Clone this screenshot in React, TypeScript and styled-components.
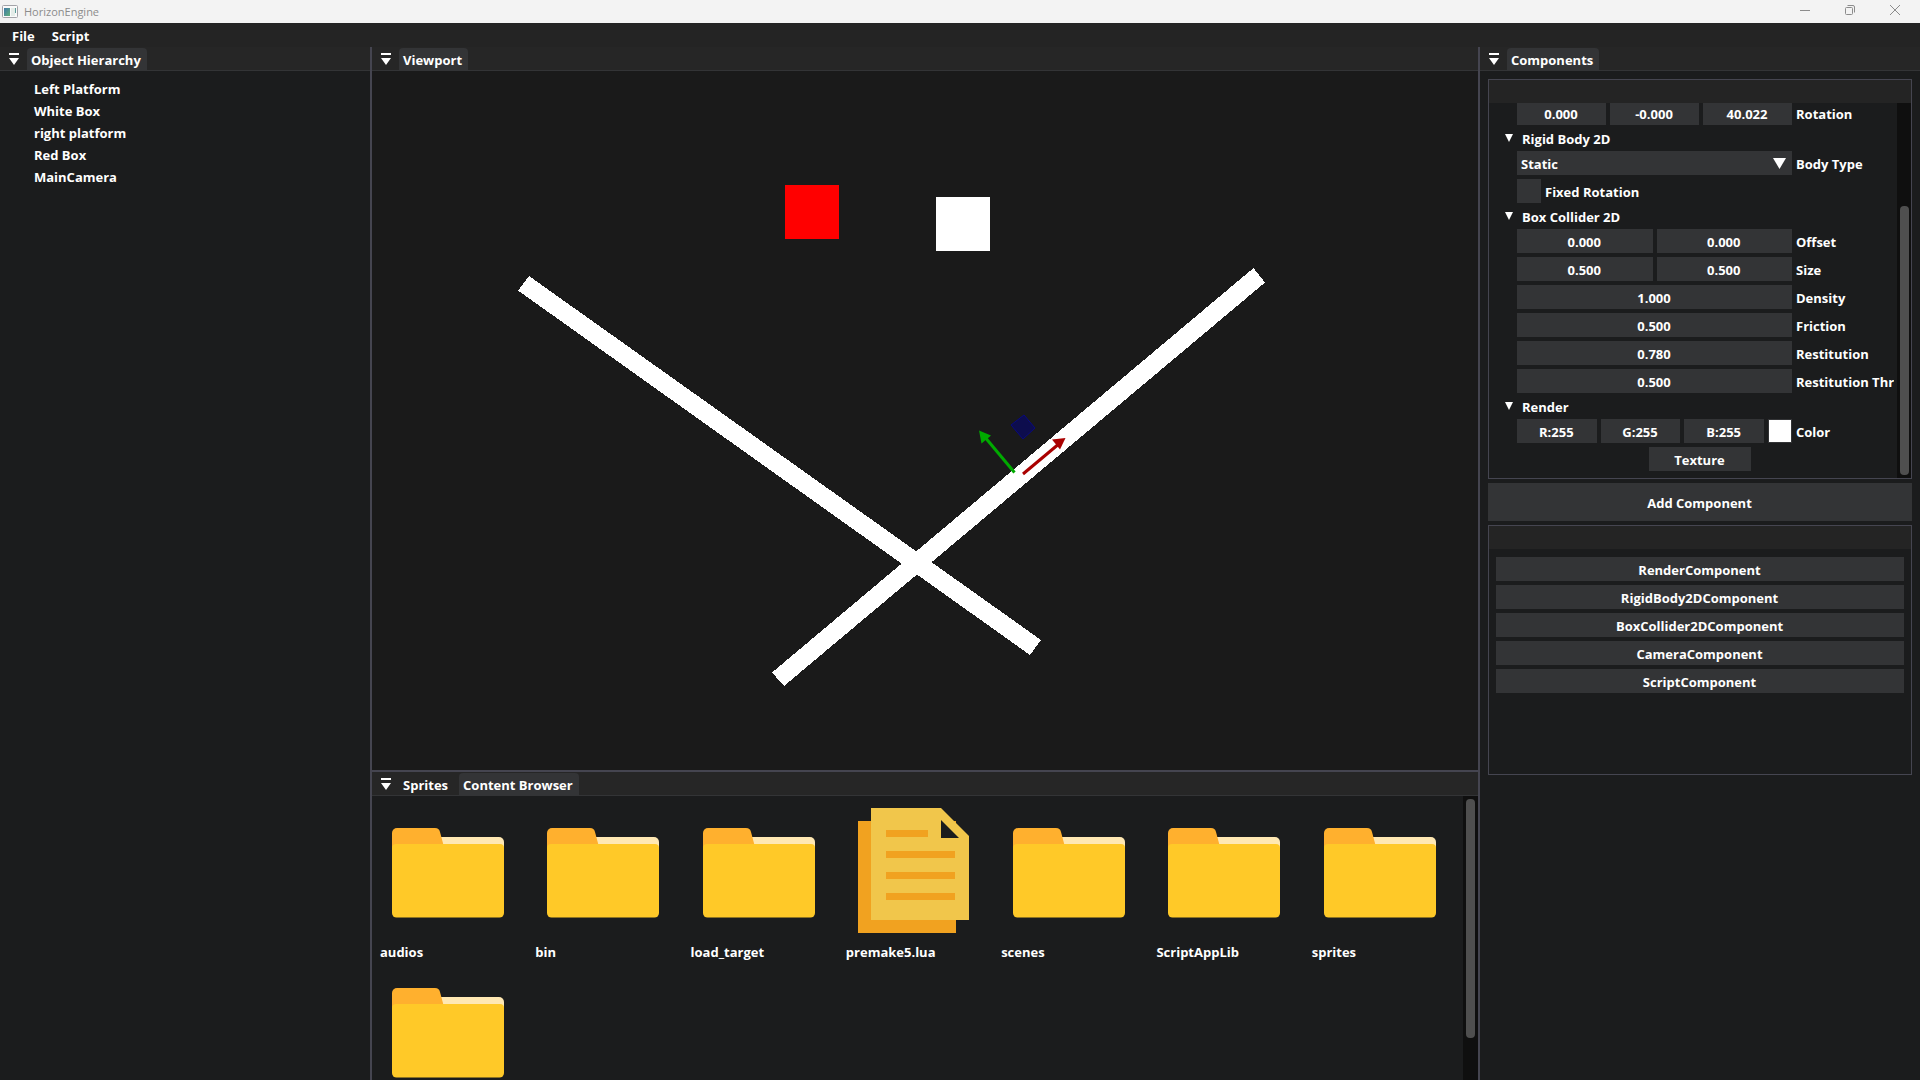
import React from "react";
import styled, { createGlobalStyle } from "styled-components";

const color = {
  window: "#1b1c1d",
  scene: "#1a1a1a",
  bar: "#242424",
  tabBar: "#262626",
  control: "#333436",
  border: "#454550",
  track: "#0f0f0f",
  thumb: "#4f4f4f",
  text: "#ffffff",
};

const GlobalStyle = createGlobalStyle`
  *, *::before, *::after { box-sizing: border-box; }
  body { margin: 0; background: ${color.window}; }
  body, button, input, select {
    font: 700 13px/18px "Open Sans", "Noto Sans", sans-serif;
    color: ${color.text};
  }
  button { border: 0; padding: 0; background: none; }
`;

const Window = styled.div`
  height: 100vh;
  display: flex;
  flex-direction: column;
  overflow: hidden;
`;

const TitleBar = styled.header`
  flex: none;
  height: 23px;
  display: flex;
  align-items: center;
  gap: 6px;
  padding: 0 6px 0 2px;
  background: #f3f3f3;
  color: #8c8c8c;
  font-size: 11px;
  font-weight: 400;
`;

const Title = styled.span`
  flex: 1;
  color: #8c8c8c;
`;

const CaptionButton = styled.button`
  align-self: flex-start;
  width: 39px;
  height: 20px;
  display: grid;
  place-items: center;
`;

const MenuBar = styled.nav`
  flex: none;
  height: 24px;
  display: flex;
  align-items: center;
  gap: 17px;
  padding: 2px 12px 0;
  background: ${color.bar};
`;

const Workspace = styled.main`
  flex: 1;
  min-height: 0;
  display: grid;
  grid-template-columns: 370px minmax(0, 1fr) 440px;
  gap: 2px;
  background: ${color.border};
`;

const Center = styled.div`
  min-height: 0;
  display: grid;
  grid-template-rows: minmax(0, 1fr) 308px;
  gap: 2px;
`;

const Panel = styled.section<{ $scene?: boolean }>`
  min-width: 0;
  min-height: 0;
  display: flex;
  flex-direction: column;
  background: ${(p) => (p.$scene ? color.scene : color.window)};
`;

const TabBar = styled.div`
  flex: none;
  height: 24px;
  display: flex;
  align-items: flex-end;
  gap: 5px;
  padding-left: 9px;
  background: ${color.tabBar};
  border-bottom: 1px solid ${color.control};
`;

const TabMenu = styled.button`
  width: 13px;
  height: 22px;
  display: flex;
  align-items: center;
`;

const Tab = styled.button<{ $active?: boolean }>`
  height: 22px;
  padding: 3px 6px 1px 4px;
  border-radius: 4px 4px 0 0;
  background: ${(p) => (p.$active ? color.control : "transparent")};
`;

const EntityList = styled.ul`
  margin: 0;
  padding: 7px 34px;
  list-style: none;
`;

const Entity = styled.button`
  display: block;
  height: 22px;
`;

const Scene = styled.svg`
  flex: 1;
  min-height: 0;
  width: 100%;
  display: block;
`;

const ScrollRow = styled.div`
  flex: 1;
  min-height: 0;
  display: flex;
`;

const Track = styled.div<{ $width: number }>`
  flex: none;
  width: ${(p) => p.$width}px;
  display: flex;
  flex-direction: column;
  align-items: center;
  padding: 3px 2px;
  background: ${color.track};
`;

const Thumb = styled.div<{ $size: string; $end?: boolean }>`
  width: 9px;
  height: ${(p) => p.$size};
  margin-top: ${(p) => (p.$end ? "auto" : 0)};
  border-radius: 4px;
  background: ${color.thumb};
`;

const Assets = styled.div`
  flex: 1;
  min-width: 0;
  overflow: hidden;
  display: grid;
  grid-template-columns: repeat(7, minmax(0, 1fr));
  align-content: start;
  gap: 3px 12px;
  padding: 8px;
`;

const Asset = styled.button`
  height: 157px;
  display: flex;
  flex-direction: column;
  align-items: flex-start;
  gap: 5px;
  text-align: left;
  svg { display: block; margin: 3px 4px; flex: none; }
`;

const Inspector = styled.div`
  display: flex;
  flex-direction: column;
  gap: 4px;
  padding: 8px;
`;

const Child = styled.div<{ $height: number }>`
  height: ${(p) => p.$height}px;
  display: flex;
  flex-direction: column;
  border: 1px solid ${color.border};
`;

const ChildTitle = styled.div`
  flex: none;
  height: 23px;
  background: ${color.bar};
`;

const Properties = styled.div`
  flex: 1;
  min-width: 0;
  overflow: hidden;
  display: flex;
  flex-direction: column;
  justify-content: flex-end;
  gap: 4px;
  padding: 0 3px 7px 28px;
`;

const Row = styled.div`
  flex: none;
  height: 24px;
  display: grid;
  grid-template-columns: minmax(0, 1fr) 98px;
  gap: 4px;
`;

const Fields = styled.div`
  display: flex;
  gap: 4px;
`;

const Label = styled.label`
  height: 24px;
  overflow: hidden;
  white-space: nowrap;
  line-height: 26px;
`;

const Field = styled.input`
  flex: 1;
  min-width: 0;
  width: 0;
  height: 24px;
  padding: 2px 1px 0 0;
  border: 0;
  background: ${color.control};
  text-align: center;
`;

const SelectBox = styled.div`
  display: grid;
  align-items: center;
  background: ${color.control};
  > * { grid-area: 1 / 1; }
  svg { justify-self: end; margin-right: 6px; pointer-events: none; }
`;

const Select = styled.select`
  appearance: none;
  width: 100%;
  height: 24px;
  padding: 2px 4px 0;
  border: 0;
  background: none;
`;

const CheckRow = styled.label`
  flex: none;
  height: 24px;
  display: flex;
  gap: 4px;
  line-height: 26px;
`;

const Check = styled.input`
  appearance: none;
  width: 24px;
  height: 24px;
  margin: 0;
  background: ${color.control};
`;

const Group = styled.button`
  flex: none;
  height: 18px;
  display: flex;
  align-items: center;
  gap: 9px;
  margin-left: -12px;
  padding-top: 2px;
  svg { margin-bottom: 2px; }
`;

const Swatch = styled.button`
  flex: none;
  width: 24px;
  height: 24px;
  border: 1px solid ${color.control};
  background: #fff;
`;

const ActionRow = styled.div`
  flex: none;
  display: flex;
  justify-content: center;
  padding-right: 11px;
`;

const Action = styled.button<{ $tall?: boolean; $width?: number }>`
  flex: none;
  width: ${(p) => (p.$width ? `${p.$width}px` : "100%")};
  height: ${(p) => (p.$tall ? 38 : 24)}px;
  padding: 2px 1px 0 0;
  background: ${color.control};
`;

const ActionList = styled.div`
  display: flex;
  flex-direction: column;
  gap: 4px;
  padding: 8px 7px;
`;

const TabMenuIcon = () => (
  <svg width="10" height="12" viewBox="0 0 10 12" fill="#fff" aria-hidden="true">
    <path d="M0 0h10v2H0zM0 5h10L5 12z" />
  </svg>
);

const Triangle = ({ w, h }: { w: number; h: number }) => (
  <svg width={w} height={h} viewBox="0 0 10 10" preserveAspectRatio="none" fill="#fff" aria-hidden="true">
    <path d="M0 0h10L5 10z" />
  </svg>
);

const AppIcon = () => (
  <svg width="16" height="14" viewBox="0 0 16 14" aria-hidden="true">
    <defs>
      <linearGradient id="app" x1="0" y1="0" x2="1" y2="1">
        <stop offset="0" stopColor="#3f78a8" />
        <stop offset="1" stopColor="#62b27c" />
      </linearGradient>
    </defs>
    <rect x="0.5" y="0.5" width="15" height="12" rx="1" fill="#fafafa" stroke="#a3a3a8" />
    <path d="M2 3h6v8H2z" fill="url(#app)" />
    <path d="M9 3h4v8H9z" fill="#e4ece8" />
    <path d="M13 3h1v5h-1z" fill="#5b9c9a" />
  </svg>
);

const FolderIcon = () => (
  <svg width="128" height="128" viewBox="0 0 128 128" aria-hidden="true">
    <path d="M50 30h65a5 5 0 0 1 5 5v15H50z" fill="#ffe8b3" />
    <path d="M8 26a5 5 0 0 1 5-5h38c3 0 4 1 5 4l4 15v10H8z" fill="#ffb02e" />
    <path d="M12 37h104a4 4 0 0 1 4 4v65a4.500 4.500 0 0 1-4.500 4.500H12.500A4.500 4.500 0 0 1 8 106V41a4 4 0 0 1 4-4z" fill="#ffc928" />
  </svg>
);

const FileIcon = () => (
  <svg width="128" height="128" viewBox="0 0 128 128" aria-hidden="true">
    <path d="M8 14h98v112H8z" fill="#f1a220" />
    <path d="M21 1h70l28 28v84H21z" fill="#f1c64b" />
    <path d="M91 13v18h18z" fill={color.window} />
    <path d="M36 23h42v7H36zM36 44h69v7H36zM36 65h69v7H36zM36 86h69v7H36z" fill="#f1a220" />
  </svg>
);

const entities = ["Left Platform", "White Box", "right platform", "Red Box", "MainCamera"];

const assets = [
  { name: "audios" },
  { name: "bin" },
  { name: "load_target" },
  { name: "premake5.lua", file: true },
  { name: "scenes" },
  { name: "ScriptAppLib" },
  { name: "sprites" },
  { name: "" },
];

const colliderRows = [
  { label: "Offset", values: ["0.000", "0.000"] },
  { label: "Size", values: ["0.500", "0.500"] },
  { label: "Density", values: ["1.000"] },
  { label: "Friction", values: ["0.500"] },
  { label: "Restitution", values: ["0.780"] },
  { label: "Restitution Threshold", values: ["0.500"] },
];

const components = [
  "RenderComponent",
  "RigidBody2DComponent",
  "BoxCollider2DComponent",
  "CameraComponent",
  "ScriptComponent",
];

function Property({ label, values, children }: { label: string; values: string[]; children?: React.ReactNode }) {
  const id = label.toLowerCase().replace(/ /g, "-");
  return (
    <Row>
      <Fields>
        {values.map((v, i) => (
          <Field key={i} id={i ? undefined : id} aria-label={`${label} ${i + 1}`} defaultValue={v} />
        ))}
        {children}
      </Fields>
      <Label htmlFor={id}>{label}</Label>
    </Row>
  );
}

function Tabs({ tabs, active }: { tabs: string[]; active: string }) {
  return (
    <TabBar role="tablist">
      <TabMenu aria-label="Tab list">
        <TabMenuIcon />
      </TabMenu>
      {tabs.map((t) => (
        <Tab key={t} role="tab" aria-selected={t === active} $active={t === active}>
          {t}
        </Tab>
      ))}
    </TabBar>
  );
}

function GroupHeader({ title }: { title: string }) {
  return (
    <Group aria-expanded="true">
      <Triangle w={8} h={8} />
      {title}
    </Group>
  );
}

export default function App() {
  return (
    <Window>
      <GlobalStyle />
      <TitleBar>
        <AppIcon />
        <Title>HorizonEngine</Title>
        <CaptionButton aria-label="Minimize">
          <svg width="10" height="10" viewBox="0 0 10 10" stroke="#8c8c8c">
            <path d="M0 5.5h10" />
          </svg>
        </CaptionButton>
        <CaptionButton aria-label="Restore">
          <svg width="10" height="10" viewBox="0 0 10 10" fill="none" stroke="#8c8c8c">
            <rect x="0.5" y="2.5" width="7" height="7" rx="1" />
            <path d="M2.5 0.5H8A1.5 1.5 0 0 1 9.5 2v5.5" />
          </svg>
        </CaptionButton>
        <CaptionButton aria-label="Close">
          <svg width="10" height="10" viewBox="0 0 10 10" stroke="#8c8c8c">
            <path d="M0 0l10 10M10 0L0 10" />
          </svg>
        </CaptionButton>
      </TitleBar>
      <MenuBar>
        <button>File</button>
        <button>Script</button>
      </MenuBar>
      <Workspace>
        <Panel>
          <Tabs tabs={["Object Hierarchy"]} active="Object Hierarchy" />
          <EntityList>
            {entities.map((e) => (
              <li key={e}>
                <Entity>{e}</Entity>
              </li>
            ))}
          </EntityList>
        </Panel>
        <Center>
          <Panel $scene>
            <Tabs tabs={["Viewport"]} active="Viewport" />
            <Scene viewBox="372 71 1106 699" role="img" aria-label="Scene">
              <g shapeRendering="crispEdges">
                <rect x="785" y="185" width="54" height="54" fill="#f00" />
                <rect x="936" y="197" width="54" height="54" fill="#fff" />
                <path d="M529 276L518 290.500L1030 655L1041 640zM772 672.500L784 686L1265 282.500L1253.500 268z" fill="#fff" />
              </g>
              <path d="M1024 415l11 13-12 11-12-14z" fill="#0d0d4d" stroke="#090980" />
              <path d="M1014.500 472.500L984 436" stroke="#00aa00" strokeWidth="3" />
              <path d="M979 430.500l12 5-9.500 8z" fill="#00aa00" />
              <path d="M1023 474L1060 443" stroke="#aa0000" strokeWidth="3" />
              <path d="M1065.500 438l-13.500 1.500 8 10z" fill="#aa0000" />
            </Scene>
          </Panel>
          <Panel>
            <Tabs tabs={["Sprites", "Content Browser"]} active="Content Browser" />
            <ScrollRow>
              <Assets>
                {assets.map((a) => (
                  <Asset key={a.name} aria-label={a.name || "Folder"}>
                    {a.file ? <FileIcon /> : <FolderIcon />}
                    {a.name}
                  </Asset>
                ))}
              </Assets>
              <Track $width={15}>
                <Thumb $size="86%" />
              </Track>
            </ScrollRow>
          </Panel>
        </Center>
        <Panel>
          <Tabs tabs={["Components"]} active="Components" />
          <Inspector>
            <Child $height={400}>
              <ChildTitle />
              <ScrollRow>
                <Properties>
                  <Property label="Rotation" values={["0.000", "-0.000", "40.022"]} />
                  <GroupHeader title="Rigid Body 2D" />
                  <Row>
                    <SelectBox>
                      <Select id="body-type" defaultValue="Static">
                        <option>Static</option>
                        <option>Dynamic</option>
                        <option>Kinematic</option>
                      </Select>
                      <Triangle w={13} h={11} />
                    </SelectBox>
                    <Label htmlFor="body-type">Body Type</Label>
                  </Row>
                  <CheckRow>
                    <Check type="checkbox" />
                    Fixed Rotation
                  </CheckRow>
                  <GroupHeader title="Box Collider 2D" />
                  {colliderRows.map((r) => (
                    <Property key={r.label} {...r} />
                  ))}
                  <GroupHeader title="Render" />
                  <Property label="Color" values={["R:255", "G:255", "B:255"]}>
                    <Swatch aria-label="Pick color" />
                  </Property>
                  <ActionRow>
                    <Action $width={102}>Texture</Action>
                  </ActionRow>
                </Properties>
                <Track $width={14}>
                  <Thumb $size="73%" $end />
                </Track>
              </ScrollRow>
            </Child>
            <Action $tall>Add Component</Action>
            <Child $height={250}>
              <ChildTitle />
              <ActionList>
                {components.map((c) => (
                  <Action key={c}>{c}</Action>
                ))}
              </ActionList>
            </Child>
          </Inspector>
        </Panel>
      </Workspace>
    </Window>
  );
}
